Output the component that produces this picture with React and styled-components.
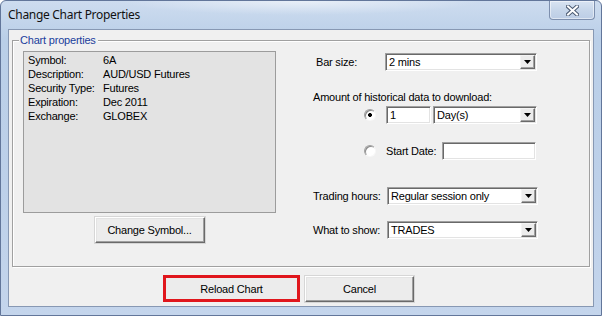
import React from 'react'
import styled, { createGlobalStyle } from 'styled-components'

const GlobalStyle = createGlobalStyle`
  html, body {
    margin: 0;
    padding: 0;
    background: #ffffff;
  }
  body {
    width: 602px;
    height: 316px;
    overflow: hidden;
  }
`

const info = [
  ['Symbol:', '6A'],
  ['Description:', 'AUD/USD Futures'],
  ['Security Type:', 'Futures'],
  ['Expiration:', 'Dec 2011'],
  ['Exchange:', 'GLOBEX'],
]

function DropArrow() {
  return (
    <ArrowButton>
      <svg width="7" height="4" viewBox="0 0 7 4">
        <path d="M0 0h7L3.5 4z" fill="#000" />
      </svg>
    </ArrowButton>
  )
}

function Combo({ w, children }) {
  return (
    <ComboBox $w={w}>
      <ComboText>{children}</ComboText>
      <DropArrow />
    </ComboBox>
  )
}

export default function App() {
  return (
    <>
      <GlobalStyle />
      <Window>
        <TitleBar>
          <Title>Change Chart Properties</Title>
          <CloseButton aria-label="Close">
            <svg width="13" height="11" viewBox="0 0 13 11">
              <path d="M2 1.5l9 8M11 1.5l-9 8" stroke="#4b5a72" strokeWidth="4" strokeLinecap="square" fill="none" />
              <path d="M2 1.5l9 8M11 1.5l-9 8" stroke="#ffffff" strokeWidth="2" strokeLinecap="square" fill="none" />
            </svg>
          </CloseButton>
        </TitleBar>
        <Client>
          <Group>
            <Legend>Chart properties</Legend>
            <GroupBody>
              <LeftColumn>
                <InfoBox>
                  {info.map(([k, v]) => (
                    <React.Fragment key={k}>
                      <span>{k}</span>
                      <span>{v}</span>
                    </React.Fragment>
                  ))}
                </InfoBox>
                <Button $w={110}>Change Symbol...</Button>
              </LeftColumn>
              <RightColumn>
                <Row $top={2}>
                  <Label $w={72} $indent={3}>Bar size:</Label>
                  <Combo w={152}>2 mins</Combo>
                </Row>
                <Caption>Amount of historical data to download:</Caption>
                <Row $top={2} $indent={51}>
                  <Radio $checked />
                  <TextField $w={45}>1</TextField>
                  <Combo w={104}>Day(s)</Combo>
                </Row>
                <Row $top={18} $indent={51}>
                  <Radio />
                  <Label $w={56}>Start Date:</Label>
                  <TextField $w={94} />
                </Row>
                <Row $top={27}>
                  <Label $w={74}>Trading hours:</Label>
                  <Combo w={151}>Regular session only</Combo>
                </Row>
                <Row $top={16}>
                  <Label $w={74}>What to show:</Label>
                  <Combo w={151}>TRADES</Combo>
                </Row>
              </RightColumn>
            </GroupBody>
          </Group>
          <Footer>
            <Button $w={137} $h={27} $highlight>Reload Chart</Button>
            <Button $w={109}>Cancel</Button>
          </Footer>
        </Client>
      </Window>
    </>
  )
}

const Window = styled.div`
  width: 602px;
  height: 316px;
  box-sizing: border-box;
  display: flex;
  flex-direction: column;
  padding: 0 7px 8px 7px;
  border: 1px solid #62769a;
  border-radius: 6px 6px 0 0;
  background:
    radial-gradient(ellipse 180px 14px at 300px 0, rgba(255, 255, 255, 0.55), rgba(255, 255, 255, 0)),
    linear-gradient(180deg, #cddcef 0%, #bacfe8 12%, #bdd0e9 60%, #c4d5ec 100%);
  font-family: "Liberation Sans", Arial, sans-serif;
  font-size: 11px;
  letter-spacing: -0.2px;
  color: #000;
`

const TitleBar = styled.div`
  height: 28px;
  display: flex;
  justify-content: space-between;
  align-items: flex-start;
  margin-right: -1px;
`

const Title = styled.div`
  font-family: "Noto Sans", "Open Sans", sans-serif;
  font-size: 12px;
  letter-spacing: -0.3px;
  line-height: 28px;
  color: #111;
`

const CloseButton = styled.div`
  width: 46px;
  height: 19px;
  box-sizing: border-box;
  display: flex;
  align-items: center;
  justify-content: center;
  border: 1px solid #7d8fae;
  border-top: none;
  border-radius: 0 0 4px 4px;
  background: linear-gradient(180deg, #d9e4f2 0%, #c7d6ea 50%, #bccde5 100%);
  box-shadow: inset 0 0 0 1px rgba(255, 255, 255, 0.5);
`

const Client = styled.div`
  flex: 1;
  display: flex;
  flex-direction: column;
  background: #f0f0f0;
  border: 1px solid #8798b3;
  padding: 3px 3px 0 3px;
`

const Group = styled.fieldset`
  margin: 0;
  padding: 4px 10px 23px 10px;
  border: 1px solid #a0a0a0;
  box-shadow: inset 1px 1px #ffffff, 1px 1px #ffffff;
  min-width: 0;
`

const Legend = styled.legend`
  margin-left: -4px;
  padding: 0 2px 0 1px;
  line-height: 14px;
  color: #1a3e9c;
  background: #f0f0f0;
`

const GroupBody = styled.div`
  display: flex;
  gap: 37px;
`

const LeftColumn = styled.div`
  width: 253px;
  display: flex;
  flex-direction: column;
  align-items: center;
  gap: 4px;
`

const InfoBox = styled.div`
  width: 253px;
  height: 162px;
  box-sizing: border-box;
  border: 1px solid #9c9c9c;
  background: #e3e3e3;
  padding: 1px 4px;
  display: grid;
  grid-template-columns: 75px 1fr;
  grid-auto-rows: 14px;
  line-height: 14px;
  align-content: start;
`

const Button = styled.div`
  width: ${p => p.$w}px;
  height: ${p => p.$h || 26}px;
  box-sizing: border-box;
  display: flex;
  align-items: center;
  justify-content: center;
  background: #ececec;
  border: ${p => (p.$highlight ? '3px solid #e0161c' : '1px solid')};
  border-color: ${p => (p.$highlight ? '#e0161c' : '#ffffff #6a6a6a #6a6a6a #ffffff')};
  box-shadow: ${p => (p.$highlight ? 'none' : 'inset -1px -1px #a0a0a0, inset 1px 1px #e3e3e3, 0 0 0 1px #d6d6d6')};
`

const RightColumn = styled.div`
  display: flex;
  flex-direction: column;
`

const Row = styled.div`
  display: flex;
  align-items: center;
  margin-top: ${p => p.$top || 0}px;
  padding-left: ${p => p.$indent || 0}px;
`

const Label = styled.span`
  width: ${p => p.$w}px;
  padding-left: ${p => p.$indent || 0}px;
  box-sizing: border-box;
  white-space: nowrap;
`

const Caption = styled.div`
  margin-top: 19px;
  line-height: 14px;
`

const Sunken = styled.div`
  height: 18px;
  box-sizing: border-box;
  background: #ffffff;
  border: 1px solid;
  border-color: #a0a0a0 #ffffff #ffffff #a0a0a0;
  box-shadow: inset 1px 1px #696969, inset -1px -1px #e3e3e3;
`

const TextField = styled(Sunken)`
  width: ${p => p.$w}px;
  padding: 0 3px;
  line-height: 16px;
  margin-right: 2px;
`

const ComboBox = styled(Sunken)`
  width: ${p => p.$w}px;
  display: flex;
  align-items: stretch;
  padding: 1px;
`

const ComboText = styled.span`
  flex: 1;
  padding-left: 2px;
  line-height: 14px;
  white-space: nowrap;
  overflow: hidden;
`

const ArrowButton = styled.span`
  width: 15px;
  box-sizing: border-box;
  display: flex;
  align-items: center;
  justify-content: center;
  background: #ececec;
  border: 1px solid;
  border-color: #f4f4f4 #6a6a6a #6a6a6a #f4f4f4;
  box-shadow: inset -1px -1px #a0a0a0;
`

const Radio = styled.span`
  width: 12px;
  height: 12px;
  box-sizing: border-box;
  border-radius: 50%;
  margin-right: 10px;
  border: 1px solid;
  border-color: #a0a0a0 #f8f8f8 #f8f8f8 #a0a0a0;
  box-shadow: inset 1px 1px #8a8a8a;
  background: radial-gradient(circle, ${p => (p.$checked ? '#000 0 1.8px, #fff 2.2px' : '#fff 0')});
`

const Footer = styled.div`
  display: flex;
  align-items: center;
  gap: 5px;
  margin-top: 8px;
  padding-left: 151px;
`
